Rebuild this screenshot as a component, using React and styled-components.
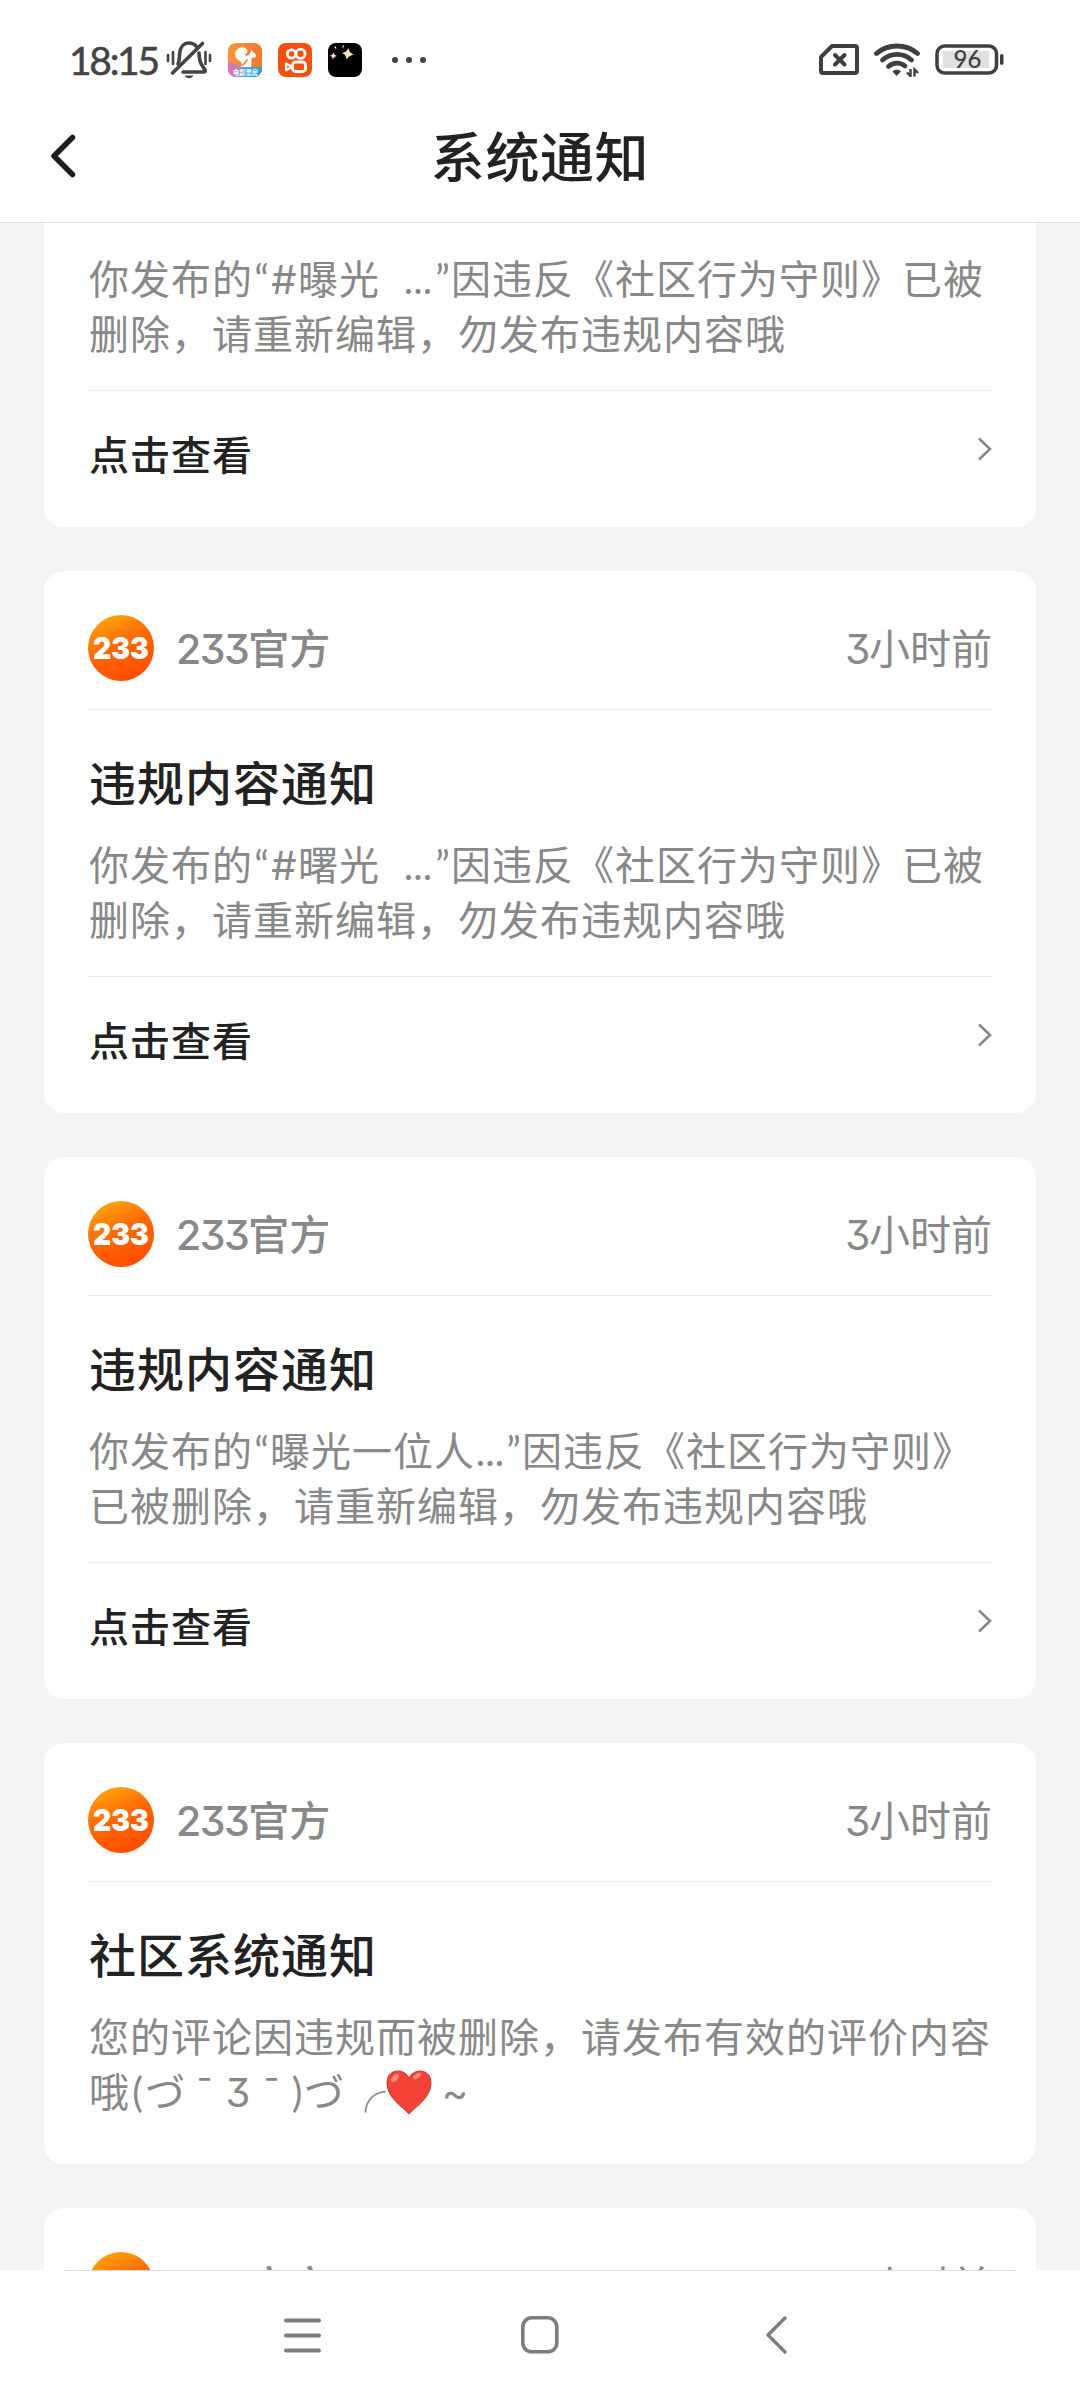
import React from 'react';
import styled, { createGlobalStyle } from 'styled-components';

const GlobalStyle = createGlobalStyle`
  * {
    box-sizing: border-box;
  }
  body {
    margin: 0;
    background: #f4f4f4;
    font-family: Inter, "Noto Sans CJK SC", sans-serif;
    font-feature-settings: "cv09";
  }
`;

const Screen = styled.div`
  display: flex;
  flex-direction: column;
  width: 1080px;
  height: 2400px;
  overflow: hidden;
`;

const StatusBar = styled.div`
  display: flex;
  justify-content: space-between;
  height: 90px;
  padding: 29px 75px 0 69px;
  background: #fff;
`;

const StatusGroup = styled.div`
  display: flex;
  align-items: center;
  gap: ${(p) => p.$gap || 0}px;
  height: 62px;
`;

const Clock = styled.span`
  width: 97px;
  font-family: Lato, sans-serif;
  font-size: 39px;
  line-height: 60px;
  letter-spacing: -2.3px;
  color: #444;
  -webkit-text-stroke: 0.5px #444;
  white-space: nowrap;
`;

const Header = styled.header`
  display: grid;
  grid-template-columns: 132px 1fr 132px;
  align-items: center;
  height: 133px;
  background: #fff;
  border-bottom: 1px solid #dfdfdf;
`;

const BackButton = styled.div`
  display: flex;
  padding-left: 48px;
`;

const HeaderTitle = styled.h1`
  margin: 6px 0 0;
  font-size: 54px;
  font-weight: 500;
  line-height: 78px;
  letter-spacing: 0.6px;
  text-align: center;
  color: #222;
`;

const ListView = styled.main`
  flex: 1;
  min-height: 0;
  padding: 0 44px;
  overflow: hidden;
`;

/* scrolled part way through the first notice */
const List = styled.div`
  display: flex;
  flex-direction: column;
  gap: 44px;
  margin-top: -238px;
`;

const Card = styled.section`
  padding: 0 44px;
  background: #fff;
  border-radius: 20px;
`;

const CardHead = styled.div`
  display: flex;
  align-items: center;
  height: 139px;
  padding-top: 16px;
  border-bottom: 1px solid #ebebeb;
`;

const Sender = styled.span`
  flex: 1;
  margin: 2px 0 0 22px;
  font-size: 41px;
  font-weight: 500;
  line-height: 60px;
  color: #888;
`;

const Time = styled.span`
  margin-top: 1px;
  font-size: 41px;
  line-height: 60px;
  color: #888;
`;

const Digits = styled.span`
  letter-spacing: -1.5px;
`;

const CardBody = styled.div`
  padding: 39px 0 ${(p) => (p.$last ? 44 : 28)}px 1px;
`;

const NoticeTitle = styled.h2`
  margin: 0 0 19px;
  font-size: 47px;
  font-weight: 500;
  line-height: 70px;
  letter-spacing: 1px;
  color: #222;
`;

const NoticeText = styled.div`
  font-size: 40px;
  line-height: 55px;
  letter-spacing: 1px;
  color: #888;
`;

const Line = styled.div`
  display: flex;
  height: 55px;
  white-space: pre;
`;

/* latin marks keep a fixed advance between the full-width characters */
const Mark = styled.span`
  display: inline-block;
  width: ${(p) => p.$w}px;
  font-family: Lato, "Noto Sans CJK SC", sans-serif;
  letter-spacing: 0;
  text-align: center;
`;

const Figure = styled(Mark)`
  font-family: Inter, "Noto Sans CJK SC", sans-serif;
`;

const CardAction = styled.div`
  display: flex;
  justify-content: space-between;
  height: 137px;
  padding: 35px 0 0 1px;
  border-top: 1px solid #ebebeb;
  font-size: 40px;
  font-weight: 500;
  line-height: 60px;
  letter-spacing: 1px;
  color: #222;
`;

const Chevron = styled.svg`
  margin-top: 11px;
`;

const NavBar = styled.nav`
  height: 130px;
  padding: 0 65px;
  background: #fff;
`;

const NavLine = styled.div`
  height: 1px;
  background: #dcdcdc;
`;

const NavKeys = styled.div`
  display: flex;
  justify-content: space-between;
  padding: 40px 213px 0;
`;

const LogoText = styled.text`
  font-size: 30px;
  font-weight: 900;
  font-feature-settings: normal;
  fill: #fff;
`;

const BellOff = () => (
  <svg width="46" height="40" viewBox="0 0 46 40" fill="none" stroke="#444" strokeWidth="3.6" strokeLinecap="round">
    <path d="M12 24c1.500-3 1.300-6 1.600-10C14 7 18 3 23 3c3 0 5.500 1.200 7 3" />
    <path d="M33 13c.4 5 .3 8 2.500 11.500L39 30c.6 1.200 0 2-1.300 2H17" />
    <path d="M36.500 3.500 6.500 33" />
    <path d="M18.500 35.600h9c-1.500 3.400-7.500 3.400-9 0z" fill="#444" stroke="none" />
    <path d="M2 15v6M7 12v12M39.500 12v12M44 15v6" strokeWidth="2.600" />
  </svg>
);

const BrowserApp = () => (
  <svg width="34" height="34" viewBox="0 0 34 34">
    <defs>
      <linearGradient id="ucTop" x1="0" y1="0" x2="1" y2="0">
        <stop offset="0" stopColor="#f9953d" />
        <stop offset="1" stopColor="#f4762b" />
      </linearGradient>
      <linearGradient id="ucBottom" x1="0" y1="0" x2="1" y2="0">
        <stop offset="0" stopColor="#ee6fb6" />
        <stop offset=".35" stopColor="#8c8fd8" />
        <stop offset=".6" stopColor="#37aee0" />
        <stop offset="1" stopColor="#22a3dd" />
      </linearGradient>
      <clipPath id="ucClip">
        <rect width="34" height="34" rx="8" />
      </clipPath>
    </defs>
    <g clipPath="url(#ucClip)">
      <rect width="34" height="34" fill="url(#ucTop)" />
      <path d="M0 19c5 0 9 5 14 5h20v10H0z" fill="url(#ucBottom)" />
      <path
        d="M12 24c3-2 2-5-1-6.500C7 15.500 6 11 8 8c2-4 8-5 10.500-2 2 2.500.5 5-2 6 2 1 3.500 1 5-.5L23.500 7l2 2.500c2 .8 2.800 3 2.300 4.500-1.200 1-3.300.5-4.300 1.500-.5 2 .5 5-.5 8.500z"
        fill="#fff"
      />
      <path d="M13.500 23c3-1.500 4-4 6-6.500" stroke="#f58336" strokeWidth="1.500" fill="none" />
      <text x="5" y="31.500" fontSize="6.300" fontWeight="700" fill="#fff" textLength="25">电影票房</text>
    </g>
  </svg>
);

const VideoApp = () => (
  <svg width="34" height="34" viewBox="0 0 34 34" fill="none" stroke="#fff" strokeWidth="2.800">
    <rect width="34" height="34" rx="8" fill="#f4500f" stroke="none" />
    <circle cx="13.500" cy="11" r="4.200" />
    <circle cx="22.500" cy="10.800" r="4.600" />
    <rect x="14.500" y="19" width="13" height="9.500" rx="3" />
    <path d="M14 23.700 8 20.500v6.800z" strokeWidth="2.200" strokeLinejoin="round" />
  </svg>
);

const StarApp = () => (
  <svg width="34" height="34" viewBox="0 0 34 34">
    <rect width="34" height="34" rx="8" fill="#000" />
    <path d="M20.500 5c.8 4 1.500 4.800 5.500 6.500-4 1-5 1.700-7.500 5-.4-3.800-1.200-4.700-4.500-6.500 3.500-.8 4.700-1.700 6.500-5z" fill="#fbe3b0" />
    <path d="M5.500 9c.4 2.500 1 3 3.500 4-2.500.7-3 1.300-4.200 3.500-.3-2.300-.8-2.900-2.800-4 2-.5 2.700-1.200 3.500-3.500z" fill="#f8d9c0" />
    <path d="M7 3.500l1 2M16 2.500l-1.500 2" stroke="#fff" strokeWidth="1.200" />
  </svg>
);

const Dots = () => (
  <svg width="48" height="8" viewBox="0 0 48 8" fill="#444">
    <circle cx="17" cy="4" r="3" />
    <circle cx="31" cy="4" r="3" />
    <circle cx="45" cy="4" r="3" />
  </svg>
);

const SimOff = () => (
  <svg width="40" height="32" viewBox="0 0 40 32" fill="none" stroke="#3f3f3f" strokeWidth="4" strokeLinecap="round" strokeLinejoin="round">
    <path d="M13 2h23a2 2 0 0 1 2 2v23a2 2 0 0 1-2 2H4a2 2 0 0 1-2-2V13z" />
    <path d="m16 11 9.500 9.500M25.500 11 16 20.500" />
  </svg>
);

const Wifi = () => (
  <svg width="46" height="34" viewBox="0 0 46 34" fill="none" stroke="#3f3f3f" strokeWidth="4.800" strokeLinecap="round">
    <path d="M2.500 10.500C14 .5 32 .5 43.500 10.500" />
    <path d="M8.500 17c8.500-7.500 20.500-7.500 29 0" />
    <path d="M14.500 23.500c5-4.500 12-4.500 16.500-.5" />
    <path d="m18.500 28.500 4 4.500 4.500-4.500c-2-2.500-6.500-2.500-8.500 0z" fill="#3f3f3f" stroke="none" />
    <path d="M36.500 26v7l-3.500-3.500M40.500 33.500v-7l3.500 3.500" strokeWidth="2.400" strokeLinecap="butt" />
  </svg>
);

const Battery = () => (
  <svg width="70" height="32" viewBox="0 0 70 32">
    <rect x="2" y="2" width="59.500" height="27" rx="7.500" fill="none" stroke="#3f3f3f" strokeWidth="3.500" />
    <rect x="8" y="7" width="46" height="17" fill="#e0e0e0" />
    <rect x="65" y="10" width="3.500" height="11" rx="1.700" fill="#3f3f3f" />
    <text x="32.500" y="24" fontFamily="Lato" fontSize="24" fontWeight="500" fill="#3f3f3f" textAnchor="middle">96</text>
  </svg>
);

const Avatar = () => (
  <svg width="66" height="66" viewBox="0 0 66 66">
    <defs>
      <linearGradient id="avatarFill" x1=".1" y1="0" x2=".55" y2="1">
        <stop offset="0" stopColor="#ffae0c" />
        <stop offset=".5" stopColor="#ff6a04" />
        <stop offset="1" stopColor="#ff4e02" />
      </linearGradient>
    </defs>
    <circle cx="33" cy="33" r="33" fill="url(#avatarFill)" />
    <LogoText x="5" y="44" textLength="56" lengthAdjust="spacingAndGlyphs">233</LogoText>
  </svg>
);

const Heart = () => (
  <svg width="46" height="55" viewBox="0 0 46 55">
    <path d="M23 49C17 42 1 33 1 18 1 10 6 6 12 6c5 0 9 3 11 7 2-4 6-7 11-7 6 0 11 4 11 12 0 15-16 24-22 31z" fill="#f44336" stroke="#c9372c" strokeWidth="1" />
    <ellipse cx="9" cy="13" rx="5" ry="2.600" transform="rotate(-45 9 13)" fill="#ff8a80" />
    <ellipse cx="31" cy="11" rx="4.500" ry="2" transform="rotate(-35 31 11)" fill="#ff8a80" />
  </svg>
);

const tagged = (word) => (
  <>
    <Line>你发布的<Mark $w={17}>“</Mark><Figure $w={28}>#</Figure>{word}<Mark $w={22}>{' '}</Mark><Mark $w={32}>...</Mark><Mark $w={17}>”</Mark>因违反《社区行为守则》已被</Line>
    <Line>删除，请重新编辑，勿发布违规内容哦</Line>
  </>
);

const notices = [
  { id: 1, title: '违规内容通知', text: tagged('曝光'), action: true },
  { id: 2, title: '违规内容通知', text: tagged('曙光'), action: true },
  {
    id: 3,
    title: '违规内容通知',
    text: (
      <>
        <Line>你发布的<Mark $w={17}>“</Mark>曝光一位人<Mark $w={30}>...</Mark><Mark $w={17}>”</Mark>因违反《社区行为守则》</Line>
        <Line>已被删除，请重新编辑，勿发布违规内容哦</Line>
      </>
    ),
    action: true,
  },
  {
    id: 4,
    title: '社区系统通知',
    text: (
      <>
        <Line>您的评论因违规而被删除，请发布有效的评价内容</Line>
        <Line>
          哦<Mark $w={15}>(</Mark>づ<Figure $w={37}>ˉ</Figure><Figure $w={30}>3</Figure><Figure $w={37}>ˉ</Figure><Mark $w={14}>)</Mark>づ
          <Mark $w={41}>╭</Mark><Heart /><Figure $w={46}>~</Figure>
        </Line>
      </>
    ),
  },
  { id: 5, title: '社区系统通知', text: <Line>您的评论因违规而被删除</Line> },
];

const Notice = ({ title, text, action }) => (
  <Card>
    <CardHead>
      <Avatar />
      <Sender><Digits>233</Digits>官方</Sender>
      <Time><Digits>3</Digits>小时前</Time>
    </CardHead>
    <CardBody $last={!action}>
      <NoticeTitle>{title}</NoticeTitle>
      <NoticeText>{text}</NoticeText>
    </CardBody>
    {action && (
      <CardAction>
        点击查看
        <Chevron width="15" height="24" viewBox="0 0 15 24" fill="none" stroke="#888" strokeWidth="2.600">
          <path d="m2 1.500 11 10.500L2 22.500" />
        </Chevron>
      </CardAction>
    )}
  </Card>
);

const App = () => {
  return (
    <>
      <GlobalStyle />
      <Screen>
        <StatusBar>
          <StatusGroup $gap={16}>
            <StatusGroup>
              <Clock>18:15</Clock>
              <BellOff />
            </StatusGroup>
            <BrowserApp />
            <VideoApp />
            <StarApp />
            <Dots />
          </StatusGroup>
          <StatusGroup $gap={15}>
            <SimOff />
            <Wifi />
            <Battery />
          </StatusGroup>
        </StatusBar>
        <Header>
          <BackButton>
            <svg width="30" height="46" viewBox="0 0 30 46" fill="none" stroke="#1c1c1c" strokeWidth="5.500" strokeLinecap="round" strokeLinejoin="round">
              <path d="M24.500 4.500 6 23l18.500 18.500" />
            </svg>
          </BackButton>
          <HeaderTitle>系统通知</HeaderTitle>
        </Header>
        <ListView>
          <List>
            {notices.map((notice) => (
              <Notice key={notice.id} title={notice.title} text={notice.text} action={notice.action} />
            ))}
          </List>
        </ListView>
        <NavBar>
          <NavLine />
          <NavKeys>
            <svg width="50" height="50" viewBox="0 0 50 50" stroke="#7d7d7d" strokeWidth="4" strokeLinecap="round">
              <path d="M8 9.500h33M8 24.500h33M8 39.500h33" />
            </svg>
            <svg width="50" height="50" viewBox="0 0 50 50" fill="none" stroke="#7d7d7d" strokeWidth="3.600">
              <rect x="7.800" y="6.800" width="34" height="34" rx="9" />
            </svg>
            <svg width="50" height="50" viewBox="0 0 50 50" fill="none" stroke="#7d7d7d" strokeWidth="3.400" strokeLinecap="round" strokeLinejoin="round">
              <path d="M33 7 16 24l17 17" />
            </svg>
          </NavKeys>
        </NavBar>
      </Screen>
    </>
  );
};

export default App;
